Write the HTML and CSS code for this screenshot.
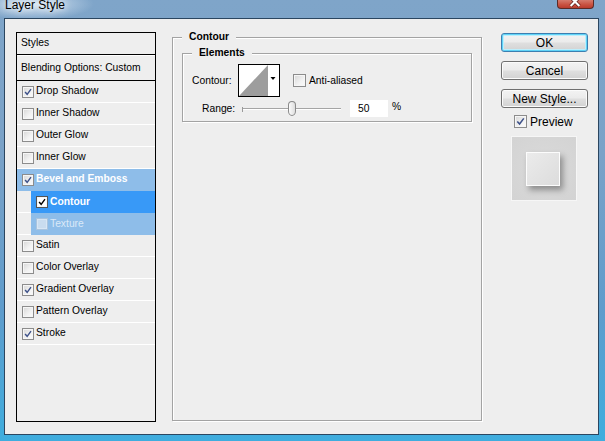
FILE: index.html
```html
<!DOCTYPE html>
<html>
<head>
<meta charset="utf-8">
<title>Layer Style</title>
<link rel="stylesheet" href="styles.css">
</head>
<body>
<div class="window">
  <div class="titlebar">
    <span class="title">Layer Style</span>
    <span class="close"><svg width="37" height="9" viewBox="0 0 37 9"><path d="M14 -3 L23 6 M23 -3 L14 6" stroke="#5a1d18" stroke-width="3.6" fill="none"/><path d="M14 -3 L23 6 M23 -3 L14 6" stroke="#fff" stroke-width="2.2" fill="none"/></svg></span>
  </div>
  <div class="client">
    <div class="list">
      <div class="item head"><span class="t">Styles</span></div>
      <div class="item blend"><span class="t">Blending Options: Custom</span></div>
      <div class="item"><span class="cb"><svg viewBox="0 0 12 12"><path d="M2.5 6 L5 8.8 L9.6 2.6"/></svg></span><span class="t">Drop Shadow</span></div>
      <div class="item"><span class="cb"></span><span class="t">Inner Shadow</span></div>
      <div class="item"><span class="cb"></span><span class="t">Outer Glow</span></div>
      <div class="item"><span class="cb"></span><span class="t">Inner Glow</span></div>
      <div class="item bevel"><span class="cb"><svg viewBox="0 0 12 12"><path d="M2.5 6 L5 8.8 L9.6 2.6"/></svg></span><span class="t">Bevel and Emboss</span></div>
      <div class="item sub"><div class="hl active"><span class="cb white"><svg viewBox="0 0 12 12"><path d="M2.5 6 L5 8.8 L9.6 2.6"/></svg></span><span class="t">Contour</span></div></div>
      <div class="item sub"><div class="hl faded"><span class="cb dim"></span><span class="t">Texture</span></div></div>
      <div class="item"><span class="cb"></span><span class="t">Satin</span></div>
      <div class="item"><span class="cb"></span><span class="t">Color Overlay</span></div>
      <div class="item"><span class="cb"><svg viewBox="0 0 12 12"><path d="M2.5 6 L5 8.8 L9.6 2.6"/></svg></span><span class="t">Gradient Overlay</span></div>
      <div class="item"><span class="cb"></span><span class="t">Pattern Overlay</span></div>
      <div class="item"><span class="cb"><svg viewBox="0 0 12 12"><path d="M2.5 6 L5 8.8 L9.6 2.6"/></svg></span><span class="t">Stroke</span></div>
    </div>

    <fieldset class="group outer">
      <legend>Contour</legend>
      <fieldset class="group inner">
        <legend>Elements</legend>
        <div class="contour-row">
          <span class="lbl">Contour:</span>
          <span class="swatch"><svg width="42" height="33" viewBox="0 0 42 33"><rect x="0.5" y="0.5" width="41" height="32" fill="#fff" stroke="#000"/><polygon points="1,32 30,1 30,32" fill="#9d9d9d"/><polygon points="32.5,13 37.5,13 35,16" fill="#000"/></svg></span>
          <span class="cb big"></span><span class="chk-text">Anti-aliased</span>
        </div>
        <div class="range-row">
          <span class="rlabel">Range:</span>
          <div class="slider">
            <span class="tick"></span>
            <span class="track"></span>
            <span class="thumb"></span>
          </div>
          <span class="num">50</span>
          <span class="pct">%</span>
        </div>
      </fieldset>
    </fieldset>

    <div class="side">
      <button class="btn default">OK</button>
      <button class="btn">Cancel</button>
      <button class="btn">New Style...</button>
      <div class="preview-check"><span class="cb big"><svg viewBox="0 0 12 12"><path d="M2.5 6 L5 8.8 L9.6 2.6"/></svg></span><span>Preview</span></div>
      <div class="preview"><div class="preview-sq"></div></div>
    </div>
  </div>
</div>
</body>
</html>
```

FILE: styles.css
```css
html, body {
  margin: 0;
  padding: 0;
}
body {
  width: 605px;
  height: 441px;
  overflow: hidden;
  font-family: "Liberation Sans", Arial, sans-serif;
}
.window {
  width: 605px;
  height: 441px;
  display: flex;
  flex-direction: column;
  background: linear-gradient(180deg, #7fa5c9 0%, #7aa2c8 35%, #5f9ccc 70%, #3fadde 100%);
}
.titlebar {
  height: 18px;
  display: flex;
  align-items: flex-start;
  flex-shrink: 0;
  background: radial-gradient(ellipse 60px 16px at 34px 4px, rgba(230,240,250,0.85), rgba(230,240,250,0) 100%);
}
.title {
  font-size: 12px;
  line-height: 12px;
  margin-top: -1px;
  margin-left: 5px;
  color: #000;
  text-shadow: 0 0 6px #fff, 0 0 10px rgba(255,255,255,0.8);
}
.close {
  margin-left: auto;
  margin-right: 11px;
  width: 37px;
  height: 9px;
  box-sizing: border-box;
  border: 1px solid #5b2b27;
  border-top: none;
  border-radius: 0 0 4px 4px;
  background: linear-gradient(180deg, #d57a6c 0%, #c8503f 60%, #b93c2e 100%);
  overflow: hidden;
  display: flex;
}
.close svg { display: block; margin-left: -1px; }

.client {
  margin: 0 6px 0 4px;
  height: 417px;
  box-sizing: border-box;
  border: 1px solid #2b4660;
  background: #eeeeee;
  display: flex;
  align-items: flex-start;
  padding: 13px 0 0 11px;
}

/* Styles list */
.list {
  width: 140px;
  height: 390px;
  box-sizing: border-box;
  border: 1px solid #000;
  background: #eeeeee;
  flex-shrink: 0;
  font-size: 10.3px;
  color: #000;
}
.item {
  height: 22px;
  box-sizing: border-box;
  border-bottom: 1px solid #fff;
  display: flex;
  align-items: center;
  padding-left: 5px;
  white-space: nowrap;
}
.t {
  margin-bottom: 2px;
}
.item.head {
  border-bottom-color: #000;
  padding-left: 4px;
}
.item.blend {
  height: 26px;
  border-top: 1px solid #fff;
  border-bottom-color: #000;
  padding-left: 4px;
}
.item.bevel {
  background: #8ebde9;
  border-bottom-color: transparent;
  color: #fff;
  font-weight: bold;
}
.item.sub {
  padding-left: 14px;
  align-items: flex-start;
}
.hl {
  flex: 1;
  height: 22px;
  display: flex;
  align-items: center;
  padding-left: 5px;
}
.hl.active {
  background: #3899f7;
  color: #fff;
  font-weight: bold;
}
.hl.faded {
  background: #8ebde9;
  color: #dbe9f8;
}

.cb {
  width: 12px;
  height: 12px;
  box-sizing: border-box;
  border: 1px solid #8c8c8c;
  background: linear-gradient(135deg, #d6d6d6 0%, #f2f2f2 60%, #fbfbfb 100%);
  box-shadow: inset 0 0 0 1px #f6f6f6;
  margin-right: 2px;
  flex-shrink: 0;
  display: flex;
}
.cb svg {
  width: 10px;
  height: 10px;
  display: block;
}
.cb svg path {
  fill: none;
  stroke: #3d5189;
  stroke-width: 1.7;
}
.cb.white {
  background: #fff;
  border-color: #555;
}
.cb.white svg path { stroke: #000; }
.cb.dim {
  background: #c9dcef;
  border-color: #aac4de;
  box-shadow: inset 0 0 0 1px #d8e6f4;
}
.cb.big {
  width: 13px;
  height: 13px;
}
.cb.big svg { width: 11px; height: 11px; }

/* Group boxes */
.group {
  margin: 0;
  min-width: 0;
  box-sizing: border-box;
  border: 1px solid #a3a3a3;
  box-shadow: 1px 1px 0 #fff, inset 1px 1px 0 #fff;
}
.group legend {
  font-size: 10.3px;
  font-weight: bold;
  line-height: 12px;
  padding: 0 7px;
  background: #eeeeee;
  color: #000;
}
.outer {
  margin-left: 16px;
  margin-top: -1px;
  width: 310px;
  height: 390px;
  padding: 0 9px;
  flex-shrink: 0;
}
.inner {
  width: 290px;
  margin-top: 4px;
  padding: 0 9px 4px 9px;
}
.contour-row {
  margin-top: 5px;
  height: 33px;
  display: flex;
  align-items: center;
  font-size: 10.3px;
}
.lbl {
  width: 46px;
  margin-bottom: 1px;
}
.swatch {
  width: 42px;
  height: 33px;
  display: block;
}
.swatch svg { display: block; }
.contour-row .cb.big {
  margin-left: 13px;
  margin-right: 3px;
}
.chk-text { margin-bottom: 1px; }
.range-row {
  margin-top: 3px;
  height: 17px;
  display: flex;
  align-items: center;
  font-size: 10.3px;
}
.rlabel {
  margin-left: 10px;
  width: 40px;
}
.slider {
  position: relative;
  width: 99px;
  height: 17px;
  display: flex;
  align-items: center;
}
.tick {
  width: 1px;
  height: 5px;
  background: #9a9a9a;
  margin-top: 1px;
}
.track {
  flex: 1;
  height: 0;
  border-top: 1px solid #a5a5a5;
  border-bottom: 1px solid #fff;
  margin-top: 1px;
}
.thumb {
  position: absolute;
  left: 46px;
  top: 1px;
  width: 8px;
  height: 15px;
  box-sizing: border-box;
  border: 1px solid #8a8a8a;
  border-radius: 4px 4px 4px 4px / 4px 4px 5px 5px;
  background: linear-gradient(90deg, #fbfbfb, #dedede);
}
.num {
  margin-left: 9px;
  width: 38px;
  height: 17px;
  box-sizing: border-box;
  background: #fff;
  padding-left: 8px;
  line-height: 17px;
}
.pct {
  margin-left: 4px;
  margin-top: -5px;
}

/* Right column */
.side {
  margin-left: 19px;
  margin-top: 1px;
  width: 87px;
  display: flex;
  flex-direction: column;
  flex-shrink: 0;
}
.btn {
  height: 19px;
  margin: 0 0 9px 0;
  padding: 0;
  box-sizing: border-box;
  border: 1px solid #707070;
  border-radius: 3px;
  background: linear-gradient(180deg, #f3f3f3 0%, #ebebeb 48%, #dfdfdf 52%, #d2d2d2 100%);
  box-shadow: inset 0 0 0 1px #fbfbfb;
  font-family: "Liberation Sans", Arial, sans-serif;
  font-size: 12px;
  line-height: 16px;
  color: #000;
}
.btn.default {
  border-color: #3c7fb1;
  box-shadow: inset 0 0 0 1px #5fd3f7, inset 0 0 0 2px #bdeefc;
}
.preview-check {
  margin-top: -2px;
  margin-left: 13px;
  height: 13px;
  display: flex;
  align-items: center;
  font-size: 12px;
}
.preview-check .cb { margin-right: 3px; }
.preview {
  margin-top: 8px;
  margin-left: 10px;
  width: 66px;
  height: 65px;
  box-sizing: border-box;
  border: 1px solid #f6f6f6;
  background: radial-gradient(ellipse at 50% 50%, #dadada 0%, #d3d3d3 100%);
  display: flex;
  align-items: center;
  justify-content: center;
}
.preview-sq {
  width: 34px;
  height: 34px;
  box-sizing: border-box;
  border: 1px solid #fcfcfc;
  background: linear-gradient(135deg, #ebebeb, #dcdcdc);
  box-shadow: 3px 4px 6px rgba(0,0,0,0.35);
  margin-left: -2px;
}
```
